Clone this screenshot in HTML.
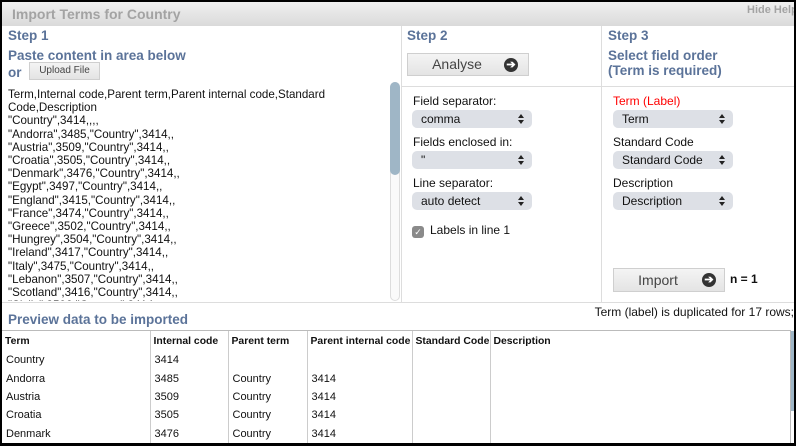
<!DOCTYPE html>
<html><head><meta charset="utf-8"><style>
*{margin:0;padding:0;box-sizing:border-box}
body{width:796px;height:446px;background:#000;position:relative;overflow:hidden;font-family:"Liberation Sans",Arial,sans-serif;font-size:12px;color:#111}
#p{position:absolute;left:2px;top:2px;width:792px;height:441px;background:#fff;overflow:hidden}
.a{position:absolute;white-space:nowrap}
.h{color:#5b7399;font-weight:bold;font-size:13.5px}
.sel{position:absolute;height:18px;width:120px;background:#dde0e6;border-radius:5px;font-size:12px;padding-left:9px;line-height:18px;color:#111}
.sel:after{content:"";position:absolute;right:8px;top:4px;border-left:3px solid transparent;border-right:3px solid transparent;border-bottom:4px solid #222}
.sel:before{content:"";position:absolute;right:8px;top:10px;border-left:3px solid transparent;border-right:3px solid transparent;border-top:4px solid #222}
.btn{position:absolute;background:linear-gradient(#f4f4f4,#e4e4e4);border:1px solid #cfcfcf;color:#444;font-size:14px}
.arr{position:absolute;width:14px;height:14px;border-radius:50%;background:#333;color:#fff;font-size:11px;line-height:14px;text-align:center;font-weight:bold}
.ta{position:absolute;left:6px;top:86px;width:380px;height:213px;overflow:hidden;font-size:11.6px;line-height:13.2px;color:#111;white-space:nowrap}
table{position:absolute;left:0;top:329px;border-collapse:collapse;font-size:11px;width:788px;table-layout:fixed}
td,th{text-align:left;padding:0 4px;height:18.4px;border-left:1px solid #ccc;white-space:nowrap;overflow:hidden}
td:first-child,th:first-child{border-left:none}
th{font-weight:bold;height:20px;font-size:10.4px;padding:0 3px}
</style></head><body>
<div id="p">
<div class="a" style="left:0;top:0;width:792px;height:24px;background:linear-gradient(#f0f0f0,#dadada)"></div>
<div class="a" style="left:10px;top:4px;font-size:14px;font-weight:bold;color:#a3a3a3">Import Terms for Country</div>
<div class="a" style="left:745px;top:2px;font-size:11px;font-weight:bold;color:#a3a3a3">Hide Help</div>

<div class="a h" style="left:6px;top:26px">Step 1</div>
<div class="a h" style="left:6px;top:46px">Paste content in area below</div>
<div class="a h" style="left:6px;top:63px">or</div>
<div class="btn" style="left:27px;top:60px;width:71px;height:18px;font-size:10px;text-align:center;line-height:16px">Upload File</div>
<div class="ta">Term,Internal code,Parent term,Parent internal code,Standard<br>Code,Description<br>"Country",3414,,,,<br>"Andorra",3485,"Country",3414,,<br>"Austria",3509,"Country",3414,,<br>"Croatia",3505,"Country",3414,,<br>"Denmark",3476,"Country",3414,,<br>"Egypt",3497,"Country",3414,,<br>"England",3415,"Country",3414,,<br>"France",3474,"Country",3414,,<br>"Greece",3502,"Country",3414,,<br>"Hungrey",3504,"Country",3414,,<br>"Ireland",3417,"Country",3414,,<br>"Italy",3475,"Country",3414,,<br>"Lebanon",3507,"Country",3414,,<br>"Scotland",3416,"Country",3414,,<br>"Sicily",3506,"Country",3414,,</div>
<div class="a" style="left:388px;top:80px;width:10px;height:219px;border:1px solid #ddd;border-radius:5px;background:#fafafa"></div>
<div class="a" style="left:388px;top:80px;width:10px;height:93px;border-radius:5px;background:#9fb6c6"></div>
<div class="a" style="left:399px;top:24px;width:1px;height:276px;background:#ddd"></div>
<div class="a" style="left:599px;top:24px;width:1px;height:276px;background:#ddd"></div>
<div class="a" style="left:400px;top:84px;width:392px;height:1px;background:#ddd"></div>

<div class="a h" style="left:405px;top:26px">Step 2</div>
<div class="btn" style="left:405px;top:51px;width:122px;height:23px;text-align:center;line-height:21px;padding-right:22px">Analyse</div>
<div class="arr" style="left:502px;top:56px">➔</div>
<div class="a" style="left:411px;top:92px">Field separator:</div>
<div class="sel" style="left:410px;top:108px">comma</div>
<div class="a" style="left:411px;top:133px">Fields enclosed in:</div>
<div class="sel" style="left:410px;top:149px">"</div>
<div class="a" style="left:411px;top:174px">Line separator:</div>
<div class="sel" style="left:410px;top:190px">auto detect</div>
<div class="a" style="left:410px;top:224px;width:12px;height:12px;background:#8a8a8a;border-radius:3px;color:#fff;font-size:9px;text-align:center;line-height:12px">✓</div>
<div class="a" style="left:428px;top:221px">Labels in line 1</div>

<div class="a h" style="left:606px;top:26px">Step 3</div>
<div class="a h" style="left:606px;top:46px">Select field order</div>
<div class="a h" style="left:606px;top:61px">(Term is required)</div>
<div class="a" style="left:611px;top:92px;color:#f00">Term (Label)</div>
<div class="sel" style="left:611px;top:108px">Term</div>
<div class="a" style="left:611px;top:133px">Standard Code</div>
<div class="sel" style="left:611px;top:149px">Standard Code</div>
<div class="a" style="left:611px;top:174px">Description</div>
<div class="sel" style="left:611px;top:190px">Description</div>
<div class="btn" style="left:611px;top:266px;width:112px;height:24px;text-align:center;line-height:22px;padding-right:22px">Import</div>
<div class="arr" style="left:700px;top:271px">➔</div>
<div class="a" style="left:728px;top:270px;font-weight:bold">n = 1</div>

<div class="a" style="left:0;top:300px;width:792px;height:1px;background:#ddd"></div>
<div class="a" style="right:0;top:303px">Term (label) is duplicated for 17 rows;</div>
<div class="a h" style="left:6px;top:310px">Preview data to be imported</div>
<div class="a" style="left:0;top:328px;width:789px;height:113px;border-top:1px solid #bbb;border-right:1px solid #bbb"></div>
<div class="a" style="left:789px;top:329px;width:3px;height:80px;background:#9fb6c6"></div>
<table>
<colgroup><col style="width:148px"><col style="width:78px"><col style="width:79px"><col style="width:105px"><col style="width:78px"><col></colgroup>
<tr><th>Term</th><th>Internal code</th><th>Parent term</th><th>Parent internal code</th><th>Standard Code</th><th>Description</th></tr>
<tr><td>Country</td><td>3414</td><td></td><td></td><td></td><td></td></tr>
<tr><td>Andorra</td><td>3485</td><td>Country</td><td>3414</td><td></td><td></td></tr>
<tr><td>Austria</td><td>3509</td><td>Country</td><td>3414</td><td></td><td></td></tr>
<tr><td>Croatia</td><td>3505</td><td>Country</td><td>3414</td><td></td><td></td></tr>
<tr><td>Denmark</td><td>3476</td><td>Country</td><td>3414</td><td></td><td></td></tr>
</table>
</div>
</body></html>
